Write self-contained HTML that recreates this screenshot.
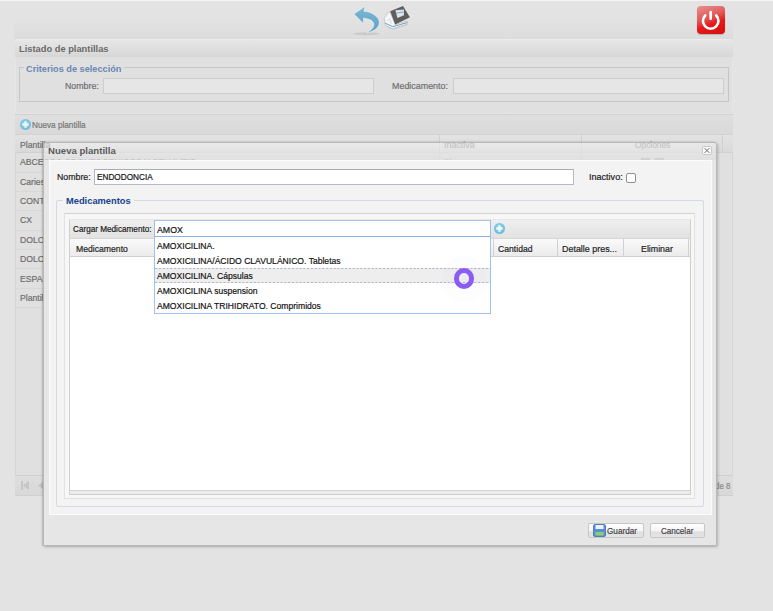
<!DOCTYPE html>
<html><head><meta charset="utf-8">
<style>
*{box-sizing:border-box;margin:0;padding:0}
html,body{width:773px;height:611px;overflow:hidden;background:#e3e3e3;font-family:"Liberation Sans",sans-serif;position:relative}
.a{position:absolute}
.tx{position:absolute;white-space:nowrap;transform-origin:0 50%;line-height:1}
.n{-webkit-text-stroke:.2px currentColor}
</style></head><body>
<div class="a" style="left:0px;top:0px;width:773px;height:1px;background:#f5f5f5"></div>
<div class="a" style="left:14px;top:14px;width:719px;height:25px;background:linear-gradient(#e4e4e4,#dcdcdc)"></div>
<svg class="a" style="left:350px;top:2px" width="34" height="36" viewBox="0 0 34 36">
  <defs><linearGradient id="ug" x1="0" y1="0" x2="0" y2="1"><stop offset="0" stop-color="#7cb8d8"/><stop offset="1" stop-color="#5e9fc4"/></linearGradient></defs>
  <ellipse cx="16.5" cy="31.8" rx="13" ry="1.5" fill="#c4c4c4" opacity=".8"/>
  <path d="M3.9 12 L15.3 4.2 L13.9 9.2 C18 9.5 21 10.5 23 12 C27.5 14.5 29.5 18 29.3 21 C29 25.5 24 29.5 16.7 31 C21 28.5 24 25.5 23.9 22.3 C23.5 19 20 17 13.4 16.1 L13.6 21.7 Z" fill="url(#ug)" stroke="#f0f4f6" stroke-width=".6"/>
</svg>
<svg class="a" style="left:380px;top:0px" width="34" height="34" viewBox="0 0 34 34">
  <path d="M4.2 17.8 L9.7 11.3 L15.2 24.6 L27.2 21 L27.2 24.6 L12.6 29.3 L5.2 25.1 Z" fill="#f4f6f8" stroke="#b4b4b4" stroke-width=".6"/>
  <path d="M7.6 20.5 Q9.2 17.8 10.8 20.5 L10.8 23.5" fill="none" stroke="#c4c4c4" stroke-width=".7"/>
  <path d="M5.2 23.2 L12.8 26.6 L27.2 22.6" fill="none" stroke="#6f9fbf" stroke-width="1"/>
  <path d="M6.5 26.3 L12.7 28.6 L27 24.2" fill="none" stroke="#a9c4d6" stroke-width=".8"/>
  <path d="M10.2 11.3 L23 6 L29.9 17.3 L15.2 24.6 Z" fill="#5e5e5e"/>
  <path d="M15.4 10.2 L24 9.4 L24 15.2 L17.4 18 Z" fill="#dde3e8"/>
  <path d="M15.8 13.2 L24 11.9" stroke="#7fa3ba" stroke-width=".9"/>
</svg>
<div class="a" style="left:697px;top:6px;width:28px;height:28px;border-radius:4px;background:linear-gradient(160deg,#e89090,#e05a5a 40%,#e41a1a 62%,#d80c0c);box-shadow:0 1px 1px rgba(0,0,0,.18)"></div>
<svg class="a" style="left:697px;top:6px" width="28" height="28" viewBox="0 0 28 28">
  <path d="M8.2 9.5 A7.75 7.75 0 1 0 19.2 9.5" fill="none" stroke="#fff" stroke-width="2.6" stroke-linecap="round"/>
  <path d="M13.7 6 L13.7 12.8" stroke="#fff" stroke-width="2.6" stroke-linecap="round"/>
</svg>
<div class="a" style="left:15px;top:39px;width:718px;height:18px;background:linear-gradient(#e6e6e6,#d7d7d7);border-top:1px solid #ebebeb;border-radius:3px 3px 0 0"></div>
<div class="tx" style="left:19px;top:44.27px;font-size:9.5px;font-weight:bold;color:#6a6a6a;transform:scaleX(0.98);">Listado de plantillas</div>
<div class="a" style="left:15px;top:57px;width:718px;height:57px;background:#e0e0e0;border:1px solid #e6e6e6;border-top:none;border-radius:0 0 3px 3px"></div>
<div class="a" style="left:19px;top:67px;width:710px;height:35px;border:1px solid #c6c6c6"></div>
<div class="a" style="left:24px;top:62px;width:100px;height:10px;background:#e0e0e0"></div>
<div class="tx" style="left:25.5px;top:63.97px;font-size:9.5px;font-weight:bold;color:#6a86b2;transform:scaleX(0.967);">Criterios de selección</div>
<div class="tx n" style="left:65px;top:80.82px;font-size:9.8px;color:#6f6f6f;transform:scaleX(0.9);">Nombre:</div>
<div class="a" style="left:103px;top:78px;width:271px;height:16px;background:#e6e6e6;border:1px solid #cdcdcd"></div>
<div class="tx n" style="left:392px;top:80.82px;font-size:9.8px;color:#6f6f6f;transform:scaleX(0.91);">Medicamento:</div>
<div class="a" style="left:453px;top:78px;width:271px;height:16px;background:#e6e6e6;border:1px solid #cdcdcd"></div>
<div class="a" style="left:15px;top:114px;width:718px;height:20px;background:linear-gradient(#dfdfdf,#d9d9d9);border-top:1px solid #d0d0d0"></div>
<div class="a" style="left:20px;top:119px;width:11px;height:11px;border-radius:50%;background:radial-gradient(circle at 45% 40%,#9ad3e8,#5cb2d6)"></div>
<svg class="a" style="left:20px;top:119px" width="11" height="11" viewBox="0 0 11 11"><path d="M5.5 2.3 V8.7 M2.3 5.5 H8.7" stroke="#eef4f6" stroke-width="2.3"/></svg>
<div class="tx n" style="left:32px;top:121.20px;font-size:9px;color:#777;transform:scaleX(0.909);">Nueva plantilla</div>
<div class="a" style="left:15px;top:134px;width:718px;height:342px;background:#e0e0e0;border-left:1px solid #d6d6d6;border-right:1px solid #d6d6d6"></div>
<div class="a" style="left:15px;top:134px;width:718px;height:19px;background:linear-gradient(#e3e3e3,#d9d9d9);border-top:1px solid #d2d2d2;border-bottom:1px solid #d0d0d0"></div>
<div class="tx n" style="left:20px;top:139.59px;font-size:9.6px;color:#6e6e6e;transform:scaleX(0.9);">Plantilla</div>
<div class="tx n" style="left:443.5px;top:140.19px;font-size:9.6px;color:#8a8a8a;transform:scaleX(0.93);">Inactiva</div>
<div class="tx n" style="left:634.6px;top:140.19px;font-size:9.6px;color:#8a8a8a;transform:scaleX(0.87);">Opciones</div>
<div class="tx n" style="left:445px;top:157.29px;font-size:9.6px;color:#6e6e6e;transform:scaleX(0.9);">No</div>
<div class="a" style="left:641px;top:158px;width:9px;height:4px;background:#9aa3ad"></div>
<div class="a" style="left:655px;top:158px;width:9px;height:4px;background:#b09a9a"></div>
<div class="a" style="left:439px;top:135px;width:1px;height:25px;background:#d0d0d0"></div>
<div class="a" style="left:581px;top:135px;width:1px;height:25px;background:#d0d0d0"></div>
<div class="a" style="left:722px;top:135px;width:1px;height:17px;background:#d0d0d0"></div>
<div class="a" style="left:15px;top:172px;width:701px;height:1px;background:#d8d8d8"></div>
<div class="tx n" style="left:20.3px;top:157.29px;font-size:9.6px;color:#6e6e6e;transform:scaleX(0.9);">ABCESOS ODONTOGENICOS Y CELULITIS</div>
<div class="a" style="left:15px;top:191px;width:701px;height:1px;background:#d8d8d8"></div>
<div class="tx n" style="left:20.3px;top:176.69px;font-size:9.6px;color:#6e6e6e;transform:scaleX(0.9);">Caries</div>
<div class="a" style="left:15px;top:210px;width:701px;height:1px;background:#d8d8d8"></div>
<div class="tx n" style="left:20.3px;top:196.09px;font-size:9.6px;color:#6e6e6e;transform:scaleX(0.9);">CONTROL</div>
<div class="a" style="left:15px;top:230px;width:701px;height:1px;background:#d8d8d8"></div>
<div class="tx n" style="left:20.3px;top:215.49px;font-size:9.6px;color:#6e6e6e;transform:scaleX(0.9);">CX</div>
<div class="a" style="left:15px;top:249px;width:701px;height:1px;background:#d8d8d8"></div>
<div class="tx n" style="left:20.3px;top:234.89px;font-size:9.6px;color:#6e6e6e;transform:scaleX(0.9);">DOLOR</div>
<div class="a" style="left:15px;top:268px;width:701px;height:1px;background:#d8d8d8"></div>
<div class="tx n" style="left:20.3px;top:254.29px;font-size:9.6px;color:#6e6e6e;transform:scaleX(0.9);">DOLOR</div>
<div class="a" style="left:15px;top:288px;width:701px;height:1px;background:#d8d8d8"></div>
<div class="tx n" style="left:20.3px;top:273.69px;font-size:9.6px;color:#6e6e6e;transform:scaleX(0.9);">ESPANTA</div>
<div class="a" style="left:15px;top:307px;width:701px;height:1px;background:#d8d8d8"></div>
<div class="tx n" style="left:20.3px;top:293.09px;font-size:9.6px;color:#6e6e6e;transform:scaleX(0.9);">Plantilla</div>
<div class="a" style="left:15px;top:475px;width:718px;height:21px;background:linear-gradient(#dedede,#d8d8d8);border-top:1px solid #d0d0d0;border-bottom:1px solid #d0d0d0"></div>
<svg class="a" style="left:20px;top:480px" width="24" height="12" viewBox="0 0 24 12"><path d="M1 1 H3 V10 H1 Z" fill="#c6c6c6"/><path d="M9 1 L3 5.5 L9 10 Z" fill="#c6c6c6"/><path d="M23.5 1.5 L18 5.5 L23.5 9.5 Z" fill="#c2c2c2"/></svg>
<div class="tx n" style="left:714.5px;top:482.06px;font-size:8.8px;color:#8a8a8a;transform:scaleX(0.9);">de 8</div>
<div class="a" style="left:43px;top:142px;width:674px;height:404px;border:1px solid #b8b8b8;border-radius:3px 3px 0 0;box-shadow:1px 1px 3px rgba(0,0,0,.2),-1px 0 2px rgba(0,0,0,.18)"></div>
<div class="a" style="left:44px;top:143px;width:672px;height:17px;background:linear-gradient(rgba(242,242,242,.55),rgba(224,224,224,.75));border-radius:2px 2px 0 0"></div>
<div class="a" style="left:44px;top:160px;width:672px;height:385px;background:#e6e6e6"></div>
<div class="tx" style="left:48px;top:146.02px;font-size:9.8px;font-weight:bold;color:#5c5c5c;transform:scaleX(0.98);">Nueva plantilla</div>
<div class="a" style="left:702px;top:146px;width:10px;height:9px;background:#fafafa;border:1px solid #c8c8c8;border-radius:2px"></div>
<svg class="a" style="left:702px;top:146px" width="10" height="9" viewBox="0 0 10 9"><path d="M2.6 2.1 L7.4 6.9 M7.4 2.1 L2.6 6.9" stroke="#6a6a6a" stroke-width="1"/></svg>
<div class="a" style="left:49px;top:160px;width:663px;height:355px;background:#f3f3f3;border:1px solid #fbfbfb"></div>
<div class="tx n" style="left:56.6px;top:171.97px;font-size:9.5px;color:#1e1e1e;transform:scaleX(0.925);">Nombre:</div>
<div class="a" style="left:94px;top:169px;width:480px;height:16px;background:#fff;border:1px solid #b5b8c8;border-top-color:#a9abb5"></div>
<div class="tx n" style="left:97px;top:172.17px;font-size:9.5px;color:#111;transform:scaleX(0.866);">ENDODONCIA</div>
<div class="tx n" style="left:589px;top:172.17px;font-size:9.5px;color:#1e1e1e;transform:scaleX(0.952);">Inactivo:</div>
<div class="a" style="left:626px;top:172.5px;width:10px;height:10px;background:#fff;border:1px solid #8f8f8f;border-radius:2px"></div>
<div class="a" style="left:56px;top:200px;width:648px;height:307px;border:1px solid #d5d9e2;border-radius:2px"></div>
<div class="a" style="left:63px;top:194px;width:71px;height:12px;background:#f3f3f3"></div>
<div class="tx" style="left:65.8px;top:195.72px;font-size:9.8px;font-weight:bold;color:#15428b;transform:scaleX(0.95);">Medicamentos</div>
<div class="a" style="left:64px;top:213px;width:631px;height:286px;border:1px solid #e2e2e2;border-top-color:#d2d2d2;background:#f7f7f7"></div>
<div class="a" style="left:69px;top:219px;width:622px;height:276px;border:1px solid #d0d0d0;border-top-color:#e8e8e8;background:#fff"></div>
<div class="a" style="left:70px;top:490px;width:620px;height:4px;background:#ececec;border-top:1px solid #d6d6d6"></div>
<div class="a" style="left:70px;top:220px;width:620px;height:19px;background:linear-gradient(#efefef,#e2e2e2);border-bottom:1px solid #d6d6d6"></div>
<div class="tx n" style="left:73.1px;top:225.25px;font-size:8.7px;color:#222;transform:scaleX(0.94);">Cargar Medicamento:</div>
<div class="a" style="left:154px;top:220px;width:337px;height:17px;background:#fff;border:1px solid #9dbde9;border-top-color:#a9c4ea"></div>
<div class="tx n" style="left:157px;top:225.27px;font-size:9.5px;color:#111;transform:scaleX(0.925);">AMOX</div>
<div class="a" style="left:493.8px;top:223px;width:11px;height:11px;border-radius:50%;background:radial-gradient(circle at 45% 40%,#9ad6ea,#4fb3d8)"></div>
<svg class="a" style="left:493.8px;top:223px" width="11" height="11" viewBox="0 0 11 11"><path d="M5.5 2.3 V8.7 M2.3 5.5 H8.7" stroke="#f4f8fa" stroke-width="2.3"/></svg>
<div class="a" style="left:70px;top:239px;width:620px;height:18px;background:linear-gradient(#fafafa,#ebebeb);border-bottom:1px solid #d0d0d0"></div>
<div class="tx n" style="left:75.8px;top:243.72px;font-size:9.8px;color:#222;transform:scaleX(0.882);">Medicamento</div>
<div class="a" style="left:493px;top:239px;width:1px;height:17px;background:#d2d2d2"></div>
<div class="tx n" style="left:497.6px;top:243.69px;font-size:9.6px;color:#222;transform:scaleX(0.9);">Cantidad</div>
<div class="a" style="left:557px;top:239px;width:1px;height:17px;background:#d2d2d2"></div>
<div class="tx n" style="left:562px;top:243.69px;font-size:9.6px;color:#222;transform:scaleX(0.93);">Detalle pres...</div>
<div class="a" style="left:623px;top:239px;width:1px;height:17px;background:#d2d2d2"></div>
<div class="tx n" style="left:640.8px;top:243.69px;font-size:9.6px;color:#222;transform:scaleX(0.92);">Eliminar</div>
<div class="a" style="left:688px;top:239px;width:1px;height:17px;background:#d2d2d2"></div>
<div class="a" style="left:154px;top:237px;width:337px;height:77px;background:#fff;border:1px solid #9fc2ee;border-top:none"></div>
<div class="a" style="left:154px;top:236px;width:337px;height:1px;background:#8fb1e0"></div>
<div class="a" style="left:155px;top:268px;width:335px;height:15px;background:#eeeeee"></div>
<svg class="a" style="left:155px;top:268px" width="335" height="15"><path d="M0 0.5 H335 M0 14.5 H335" stroke="#b4b8c6" stroke-width="1" stroke-dasharray="2.2 1.6"/></svg>
<div class="tx n" style="left:156.8px;top:240.62px;font-size:9.8px;color:#111;transform:scaleX(0.875);">AMOXICILINA.</div>
<div class="tx n" style="left:156.8px;top:255.62px;font-size:9.8px;color:#111;transform:scaleX(0.875);">AMOXICILINA/ÁCIDO CLAVULÁNICO. Tabletas</div>
<div class="tx n" style="left:156.8px;top:270.62px;font-size:9.8px;color:#111;transform:scaleX(0.875);">AMOXICILINA. Cápsulas</div>
<div class="tx n" style="left:156.8px;top:285.62px;font-size:9.8px;color:#111;transform:scaleX(0.875);">AMOXICILINA suspension</div>
<div class="tx n" style="left:156.8px;top:300.62px;font-size:9.8px;color:#111;transform:scaleX(0.875);">AMOXICILINA TRIHIDRATO. Comprimidos</div>
<div class="a" style="left:441px;top:256px;width:46px;height:46px;border-radius:50%;background:rgba(170,140,255,.025)"></div>
<div class="a" style="left:453.8px;top:268.3px;width:20.4px;height:20.4px;border-radius:50%;border:5px solid #8b5cf4"></div>
<div class="a" style="left:588px;top:522.5px;width:56px;height:15.5px;background:linear-gradient(#fefefe,#f4f4f4 55%,#dedede 60%,#e4e4e4);border:1px solid #c6c6c6;border-radius:2px"></div>
<svg class="a" style="left:593px;top:524px" width="13" height="13" viewBox="0 0 13 13">
 <rect x=".5" y=".5" width="12" height="12" rx="1.5" fill="#5a8ed6" stroke="#3c6db5" stroke-width=".8"/>
 <rect x="2.5" y="1" width="8" height="4" fill="#eef4fb"/>
 <rect x="2.5" y="8" width="8" height="3.5" fill="#8fcf6a"/>
</svg>
<div class="tx n" style="left:607.2px;top:526.27px;font-size:9.5px;color:#444;transform:scaleX(0.86);">Guardar</div>
<div class="a" style="left:649.5px;top:522.5px;width:55px;height:15.5px;background:linear-gradient(#fefefe,#f4f4f4 55%,#dedede 60%,#e4e4e4);border:1px solid #c6c6c6;border-radius:2px"></div>
<div class="tx n" style="left:660.7px;top:526.27px;font-size:9.5px;color:#444;transform:scaleX(0.85);">Cancelar</div>
</body></html>
